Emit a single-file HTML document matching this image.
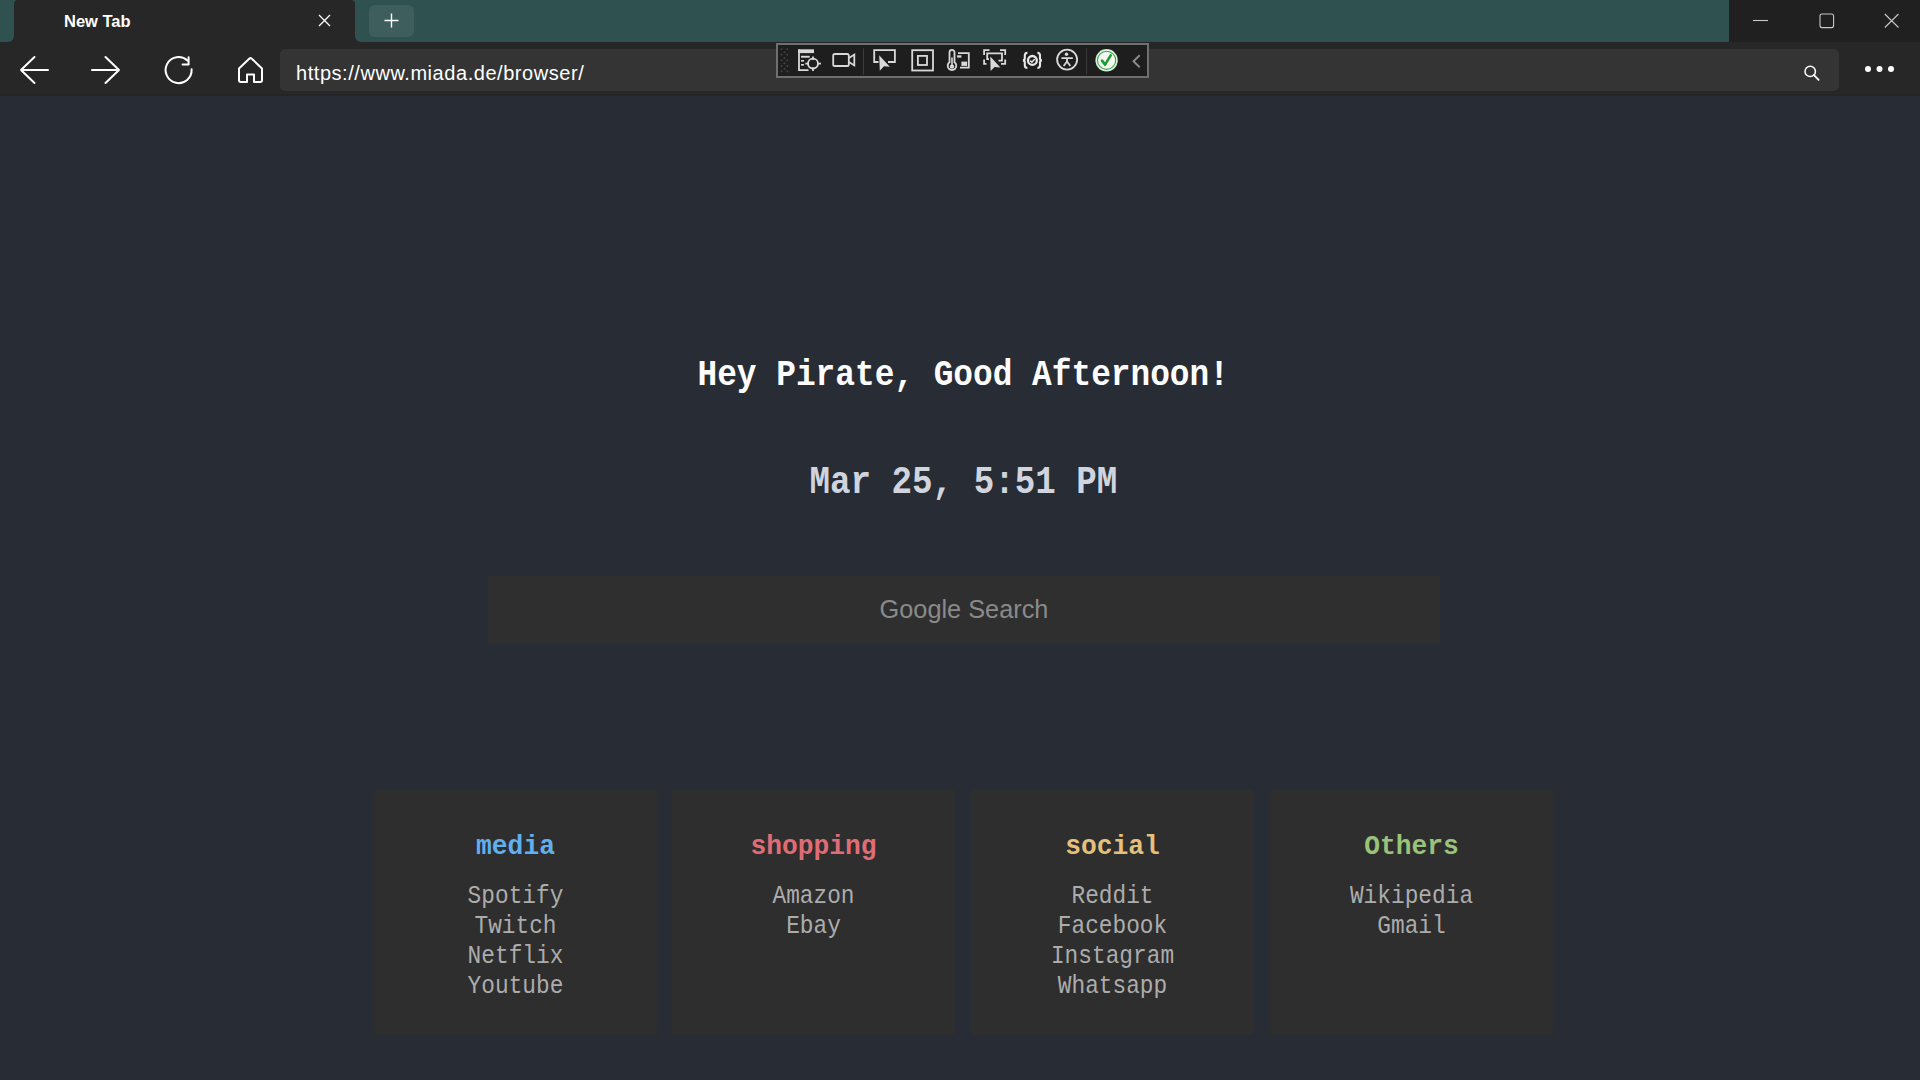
<!DOCTYPE html>
<html><head><meta charset="utf-8">
<style>
*{box-sizing:border-box;margin:0;padding:0}
html,body{width:1920px;height:1080px;overflow:hidden;background:#282c34;font-family:"Liberation Sans",sans-serif}
.abs{position:absolute}
#tabbar{left:0;top:0;width:1920px;height:42px;background:#2f5251}
#winctl{left:1729px;top:0;width:191px;height:42px;background:#202020}
#tab{left:14px;top:0;width:341px;height:42px;background:#272727;border-radius:4px 4px 0 0}
#flare{left:0;top:30px;width:380px;height:12px;background:#272727}
#tealL{left:0;top:0;width:14px;height:42px;background:#2f5251;border-radius:0 0 6px 0}
#tealR{left:355px;top:0;width:1374px;height:42px;background:#2f5251;border-radius:0 0 0 6px}
#tabtitle{left:64px;top:10.5px;font-size:16.5px;font-weight:bold;color:#fff;line-height:20px}
#newtab{left:369px;top:5px;width:45px;height:32px;border-radius:6px;background:rgba(255,255,255,0.07)}
#toolbar{left:0;top:42px;width:1920px;height:54px;background:#272727;border-bottom:2px solid #242528}
#addr{left:280px;top:49px;width:1559px;height:41.5px;border-radius:5px;background:#343434}
#url{left:296px;top:61px;font-size:20px;color:#fff;letter-spacing:0.55px;line-height:24px}
#content{left:0;top:96.5px;width:1920px;height:984px;background:#282c34}
.mono{font-family:"Liberation Mono",monospace}
#title{left:697.5px;top:356.6px;font-size:32.8px;font-weight:bold;color:#fdfdfd;line-height:40px;white-space:pre;transform:scaleY(1.1);transform-origin:50% 28.73px}
#date{left:809.5px;top:461.8px;font-size:34.2px;font-weight:bold;color:#cfd4de;line-height:44px;white-space:pre;transform:scaleY(1.11);transform-origin:50% 31.1px}
#search{left:488px;top:576px;width:952px;height:68px;background:#2f2f2f;border-radius:2px}
#stext{left:488px;top:593.9px;width:952px;text-align:center;font-size:25.3px;color:#8a8a8a;line-height:30px;padding-left:0px}
.card{top:789px;width:283px;height:246px;background:#2e2e2e;border-radius:3px;text-align:center}
.card h2{position:absolute;left:0;right:0;top:42.2px;font-family:"Liberation Mono",monospace;font-weight:bold;font-size:26.3px;line-height:32px;transform:scaleY(1.03);transform-origin:50% 23px}
.card ul{position:absolute;left:0;right:0;top:93.3px;list-style:none;font-family:"Liberation Mono",monospace;font-size:22.8px;line-height:30px;color:#acacac}
.card li{transform:scaleY(1.1);transform-origin:50% 21.07px}
#ext{left:776px;top:43px;width:373px;height:35px;background:#1e1e1e;border:2px solid #6f6f6f}
</style></head>
<body>
<div id="tabbar" class="abs"></div>
<div id="winctl" class="abs"></div>
<div id="flare" class="abs"></div><div id="tealL" class="abs"></div><div id="tealR" class="abs"></div><div id="tab" class="abs"></div>
<div id="tabtitle" class="abs">New Tab</div>
<svg class="abs" style="left:318px;top:14px" width="13" height="13" viewBox="0 0 13 13"><path d="M1 1L12 12M12 1L1 12" stroke="#fff" stroke-width="1.3"/></svg>
<div id="newtab" class="abs"></div>
<svg class="abs" style="left:384px;top:13px" width="15" height="15" viewBox="0 0 15 15"><path d="M7.5 0.5V14.5M0.5 7.5H14.5" stroke="#fff" stroke-width="1.4"/></svg>
<!-- window controls -->
<svg class="abs" style="left:1753px;top:19px" width="16" height="3"><path d="M0 1.5H15" stroke="#c8c8c8" stroke-width="1.1"/></svg>
<svg class="abs" style="left:1819px;top:13px" width="16" height="16"><rect x="1" y="1" width="13.6" height="13.6" rx="2" fill="none" stroke="#c8c8c8" stroke-width="1.1"/></svg>
<svg class="abs" style="left:1884px;top:13px" width="16" height="16"><path d="M0.8 1L14.5 14.5M14.5 1L0.8 14.5" stroke="#c8c8c8" stroke-width="1.1"/></svg>

<div id="toolbar" class="abs"></div>
<!-- back -->
<svg class="abs" style="left:18px;top:54px" width="32" height="32" viewBox="0 0 32 32"><path d="M16.5 3L3 16L16.5 29M3 16H30" fill="none" stroke="#fff" stroke-width="2" stroke-linecap="round" stroke-linejoin="round"/></svg>
<!-- forward -->
<svg class="abs" style="left:90px;top:54px" width="32" height="32" viewBox="0 0 32 32"><path d="M15.5 3L29 16L15.5 29M29 16H2" fill="none" stroke="#fff" stroke-width="2" stroke-linecap="round" stroke-linejoin="round"/></svg>
<!-- refresh -->
<svg class="abs" style="left:162px;top:54px" width="32" height="32" viewBox="0 0 32 32"><path d="M29.6 15.3A13 13 0 1 1 25.4 6.5" fill="none" stroke="#fff" stroke-width="2" stroke-linecap="round"/><path d="M26.6 3.2V10.4H20.6" fill="none" stroke="#fff" stroke-width="2" stroke-linecap="round" stroke-linejoin="round"/></svg>
<!-- home -->
<svg class="abs" style="left:236px;top:55px" width="30" height="30" viewBox="0 0 30 30"><path d="M3 13.5L13.2 3.7Q14.5 2.6 15.8 3.7L26 13.5V25.3Q26 27 24.3 27H18V19.5H11V27H4.7Q3 27 3 25.3Z" fill="none" stroke="#fff" stroke-width="2" stroke-linejoin="round"/></svg>

<div id="addr" class="abs"></div>
<div id="url" class="abs">https://www.miada.de/browser/</div>
<!-- search icon -->
<svg class="abs" style="left:1802px;top:63px" width="20" height="20" viewBox="0 0 20 20"><circle cx="8.2" cy="8.4" r="5.2" fill="none" stroke="#fff" stroke-width="1.5"/><path d="M12 12.2L16.6 16.8" stroke="#fff" stroke-width="1.8" stroke-linecap="round"/></svg>
<!-- more -->
<svg class="abs" style="left:1862px;top:62px" width="36" height="14"><circle cx="6" cy="7" r="3" fill="#fff"/><circle cx="17.5" cy="7" r="3" fill="#fff"/><circle cx="29" cy="7" r="3" fill="#fff"/></svg>

<div id="ext" class="abs"></div>
<svg class="abs" style="left:776px;top:43px" width="373" height="35" viewBox="776 43 373 35">
<g fill="#4a4a4a"><circle cx="781.5" cy="49.1" r="0.9"/><circle cx="787.3" cy="49.1" r="0.9"/><circle cx="781.5" cy="54.7" r="0.9"/><circle cx="787.3" cy="54.7" r="0.9"/><circle cx="781.5" cy="60.3" r="0.9"/><circle cx="787.3" cy="60.3" r="0.9"/><circle cx="781.5" cy="66" r="0.9"/><circle cx="787.3" cy="66" r="0.9"/><circle cx="781.5" cy="71.4" r="0.9"/><circle cx="787.3" cy="71.4" r="0.9"/><circle cx="784.4" cy="52.1" r="0.9"/><circle cx="784.4" cy="58" r="0.9"/><circle cx="784.4" cy="63.4" r="0.9"/><circle cx="784.4" cy="68.8" r="0.9"/></g>
<g fill="none" stroke="#d9d9d9" stroke-width="1.8">
<path d="M799 49.5V70.2H808.5"/>
<circle cx="813" cy="63.6" r="5"/>
<path d="M813 56.4V60M813 67.2V71.1M805.3 63.6H809M817 63.6H821"/>
<rect x="833.2" y="54" width="15.6" height="12" rx="1.6"/>
<path d="M849 58L854.3 54.6V65.4L849 62"/>
<path d="M878.5 62H874.2V50.2H894.9V62H888"/>
<rect x="912.2" y="50.2" width="20.8" height="20.3"/>
<rect x="917.9" y="55.9" width="9.1" height="9.1"/>
<path d="M949.5 62.3V52.3A2.5 2.5 0 0 1 954.5 52.3V62.3A4.3 4.3 0 1 1 949.5 62.3Z"/>
<path d="M958 53.1H968.8V67.6H960"/>
<path d="M984.1 55V50.2H989.5M1000 50.2H1005.2V55M1005.2 59.5V63.9H1001M984.1 59.5V63.9H986.5"/>
<path d="M989 59.2H987.2V53.4H1002V60.7H998.5"/>
<circle cx="1067.1" cy="59.6" r="10"/>
<path d="M1061.4 58.2H1072.8M1067 58.5V61.5L1063.6 66M1067 61.5L1070.4 66"/>
</g>
<g fill="#d9d9d9">
<rect x="798" y="49.3" width="16" height="3.8"/>
<rect x="801" y="55.8" width="8.7" height="1.9"/>
<rect x="801" y="60" width="3" height="1.6"/>
<rect x="801" y="64" width="3" height="1.6"/>
<path d="M879.2 55.3L879.8 70.8L884 66.2L889.8 66.8Z"/>
<circle cx="952" cy="66.6" r="2.2"/>
<rect x="951.2" y="57.5" width="1.6" height="8"/>
<rect x="957.1" y="55.3" width="4.3" height="2.3"/>
<rect x="961.4" y="61.6" width="5.7" height="4.3"/>
<path d="M990.3 56.5L990.6 71.1L994.6 67L1000.4 67.4Z"/>
<circle cx="1066.5" cy="54.2" r="1.7"/>
</g>
<g fill="none" stroke="#e8e8e8" stroke-width="2.1">
<path d="M1027.4 52.8Q1024.8 52.8 1024.8 55.6V58.3Q1024.8 60.4 1022.9 60.4Q1024.8 60.4 1024.8 62.5V65.3Q1024.8 68 1027.4 68"/>
<path d="M1037.4 52.8Q1040 52.8 1040 55.6V58.3Q1040 60.4 1041.9 60.4Q1040 60.4 1040 62.5V65.3Q1040 68 1037.4 68"/>
<circle cx="1032.4" cy="60.4" r="4.4" stroke-width="2.3"/>
<path d="M1030.2 60.6L1031.9 62.2L1034.8 59" stroke-width="1.5"/>
</g>
<path d="M863.5 48.3V74.8M1086.6 48.3V74.8" stroke="#3c3c3c" stroke-width="1"/>
<circle cx="1106.6" cy="60.3" r="11.2" fill="#c8f0c8"/>
<circle cx="1106.6" cy="60.3" r="10.2" fill="#f4f8f4"/>
<circle cx="1106.6" cy="60.3" r="9.1" fill="none" stroke="#3f9f4f" stroke-width="1.1"/>
<path d="M1102 60.6L1105.1 64.6L1110.7 55.4" fill="none" stroke="#1f9a30" stroke-width="2.6" stroke-linecap="round" stroke-linejoin="round"/>
<path d="M1139.7 55.3L1133.5 61.2L1139.7 67.3" fill="none" stroke="#8c8c8c" stroke-width="1.9"/>
</svg>

<div id="content" class="abs"></div>
<div id="title" class="abs mono">Hey Pirate, Good Afternoon!</div>
<div id="date" class="abs mono">Mar 25, 5:51 PM</div>
<div id="search" class="abs"></div>
<div id="stext" class="abs">Google Search</div>

<div class="card abs" style="left:374px"><h2 style="color:#61afef">media</h2><ul><li>Spotify</li><li>Twitch</li><li>Netflix</li><li>Youtube</li></ul></div>
<div class="card abs" style="left:672px"><h2 style="color:#e06c75">shopping</h2><ul><li>Amazon</li><li>Ebay</li></ul></div>
<div class="card abs" style="left:971px"><h2 style="color:#e5c07b">social</h2><ul><li>Reddit</li><li>Facebook</li><li>Instagram</li><li>Whatsapp</li></ul></div>
<div class="card abs" style="left:1270px"><h2 style="color:#98c379">Others</h2><ul><li>Wikipedia</li><li>Gmail</li></ul></div>
</body></html>
